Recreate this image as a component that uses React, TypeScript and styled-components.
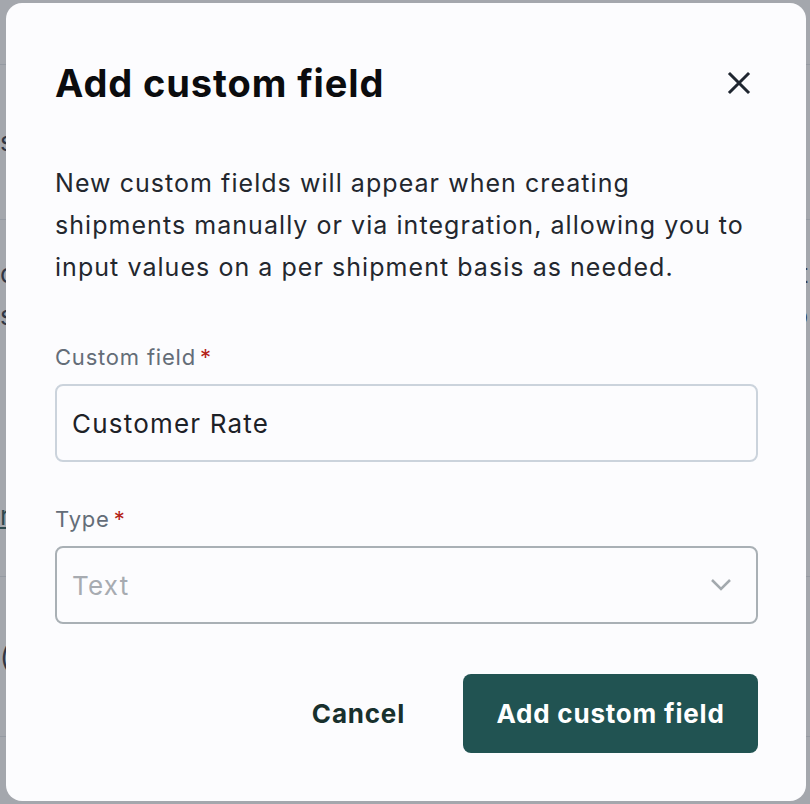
import React from "react";
import styled, { createGlobalStyle } from "styled-components";

const Global = createGlobalStyle`
  html, body { margin: 0; padding: 0; }
  body { font-family: Inter, "Noto Sans", sans-serif; background: #fff; }
  * { box-sizing: border-box; }
`;

const Page = styled.div`
  width: 810px;
  height: 804px;
  overflow: hidden;
  display: flex;
  flex-direction: column;
`;

const BgRow = styled.div<{ $h: number; $line?: boolean; $pb?: number }>`
  height: ${(p) => p.$h}px;
  flex-shrink: 0;
  border-bottom: ${(p) => (p.$line ? "1px solid #e3e6ea" : "none")};
  display: flex;
  flex-direction: column;
  justify-content: ${(p) => (p.$pb ? "flex-end" : "center")};
  padding-bottom: ${(p) => p.$pb ?? 0}px;
  gap: 14px;
  padding-right: 2px;
  font-size: 26px;
  color: #1f2937;
`;

const BgLine = styled.div`
  display: flex;
  justify-content: space-between;
  line-height: 28px;
`;

const BgLink = styled.span`
  text-decoration: underline;
  color: #1d4d4a;
`;

const Overlay = styled.div`
  position: fixed;
  inset: 0;
  background: rgba(64, 72, 84, 0.48);
  display: flex;
  align-items: flex-start;
  justify-content: flex-start;
  padding: 3px 0 0 6px;
`;

const Dialog = styled.div`
  width: 800px;
  height: 798px;
  background: #fcfcfe;
  border-radius: 16px;
  padding: 56px 48px 48px 49px;
  display: flex;
  flex-direction: column;
`;

const Header = styled.div`
  display: flex;
  align-items: center;
  justify-content: space-between;
  height: 48px;
`;

const Title = styled.h2`
  margin: 0;
  font-size: 38px;
  font-weight: 700;
  color: #0b0c0e;
  letter-spacing: 0.9px;
`;

const CloseButton = styled.button`
  border: none;
  background: transparent;
  padding: 0;
  width: 32px;
  height: 32px;
  display: flex;
  align-items: center;
  justify-content: center;
  margin-right: 3px;
  cursor: pointer;
`;

const Description = styled.p`
  margin: 55px 0 0 0;
  font-size: 25px;
  line-height: 42px;
  letter-spacing: 1.05px;
  color: #23272e;
  width: 712px;
`;

const Field = styled.div<{ $mt: number }>`
  margin-top: ${(p) => p.$mt}px;
  display: flex;
  flex-direction: column;
`;

const Label = styled.label`
  font-size: 22px;
  line-height: 28px;
  letter-spacing: 0.8px;
  color: #646d78;
  margin-bottom: 13px;
`;

const Star = styled.span`
  color: #b42318;
  margin-left: 4px;
`;

const Input = styled.div<{ $placeholder?: boolean; $border: string }>`
  height: 78px;
  border: 2px solid ${(p) => p.$border};
  border-radius: 8px;
  background: #fcfcfe;
  display: flex;
  align-items: center;
  justify-content: space-between;
  padding: 0 24px 0 15px;
  font-size: 26px;
  letter-spacing: 1.2px;
  color: ${(p) => (p.$placeholder ? "#a7abb1" : "#1d2127")};
`;

const Footer = styled.div`
  margin-top: auto;
  display: flex;
  justify-content: flex-end;
  align-items: center;
  gap: 58px;
`;

const GhostButton = styled.button`
  border: none;
  background: transparent;
  font-family: inherit;
  font-size: 26px;
  font-weight: 700;
  letter-spacing: 0.8px;
  color: #18302d;
  padding: 0;
  cursor: pointer;
`;

const PrimaryButton = styled.button`
  border: none;
  background: #215352;
  color: #fff;
  font-family: inherit;
  font-size: 26px;
  font-weight: 700;
  letter-spacing: 0.8px;
  height: 79px;
  width: 295px;
  border-radius: 8px;
  cursor: pointer;
`;

export default function App() {
  return (
    <>
      <Global />
      <Page>
        <BgRow $h={65} $line />
        <BgRow $h={155} $line>
          <BgLine>
            <span>s</span>
            <span />
          </BgLine>
        </BgRow>
        <BgRow $h={150}>
          <BgLine>
            <span>c</span>
            <span>t</span>
          </BgLine>
          <BgLine>
            <span>s</span>
            <span>o</span>
          </BgLine>
        </BgRow>
        <BgRow $h={207} $line $pb={46}>
          <BgLine>
            <BgLink>r</BgLink>
            <span />
          </BgLine>
        </BgRow>
        <BgRow $h={160} $line>
          <BgLine>
            <span>(</span>
            <span>)</span>
          </BgLine>
        </BgRow>
        <BgRow $h={67} />
      </Page>
      <Overlay>
        <Dialog role="dialog">
          <Header>
            <Title>Add custom field</Title>
            <CloseButton aria-label="Close">
              <svg width="24" height="24" viewBox="0 0 24 24" fill="none">
                <path d="M3 3L21 21M21 3L3 21" stroke="#1f2630" strokeWidth="3" strokeLinecap="square" />
              </svg>
            </CloseButton>
          </Header>
          <Description>
            New custom fields will appear when creating shipments manually or via integration, allowing you to input values on a per shipment basis as needed.
          </Description>
          <Field $mt={55}>
            <Label>
              Custom field<Star>*</Star>
            </Label>
            <Input $border="#cbd3dc">Customer Rate</Input>
          </Field>
          <Field $mt={43}>
            <Label>
              Type<Star>*</Star>
            </Label>
            <Input $border="#a9b0b5" $placeholder>
              Text
              <svg width="22" height="14" viewBox="0 0 22 14" fill="none">
                <path d="M2 2L11 11L20 2" stroke="#a3a9ae" strokeWidth="2.5" />
              </svg>
            </Input>
          </Field>
          <Footer>
            <GhostButton>Cancel</GhostButton>
            <PrimaryButton>Add custom field</PrimaryButton>
          </Footer>
        </Dialog>
      </Overlay>
    </>
  );
}
